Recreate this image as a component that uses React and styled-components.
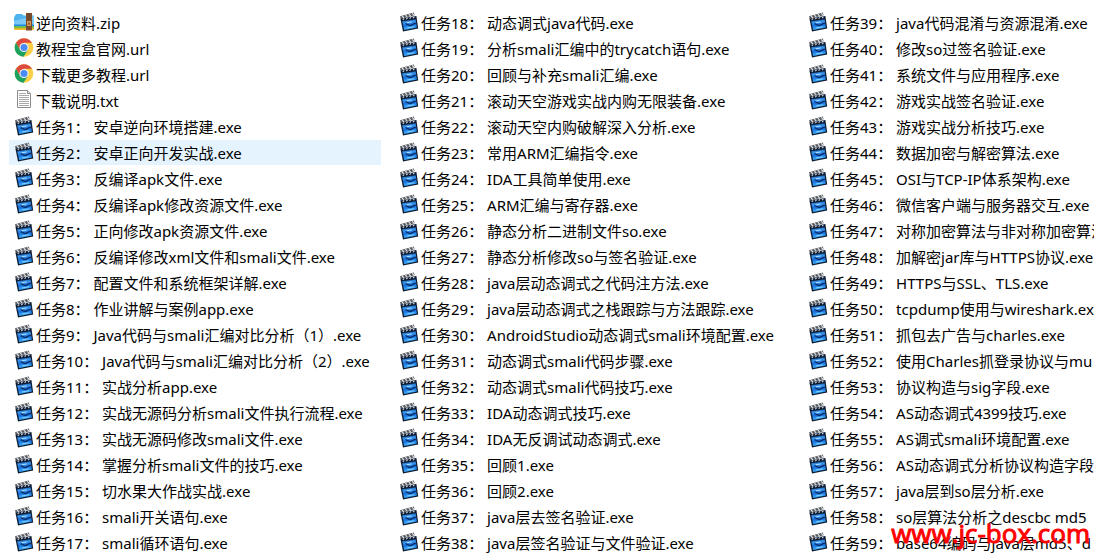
import React from "react";
import styled, { createGlobalStyle } from "styled-components";

const GlobalStyle = createGlobalStyle`
  * {
    box-sizing: border-box;
  }
  body {
    margin: 0;
    background: #ffffff;
    overflow: hidden;
  }
`;

const Explorer = styled.main`
  position: relative;
  height: 100vh;
  padding: 10px 0 0 9px;
  overflow: hidden;
  color: #000000;
  font-family: "Noto Sans", "Noto Sans CJK SC", sans-serif;
  font-size: 15px;
`;

const FileList = styled.ul`
  display: grid;
  grid-auto-flow: column;
  grid-template-rows: repeat(21, 26px);
  grid-template-columns: 372px 396px 1fr;
  column-gap: 13px;
  margin: 0;
  padding: 0;
  list-style: none;
`;

const FileRow = styled.li`
  display: flex;
  align-items: flex-start;
  gap: 2px;
  height: 25px;
  padding: 0 7px 0 5px;
  background: ${(props) => (props.$selected ? "#e5f3ff" : "transparent")};

  svg {
    flex: none;
    margin-top: 2px;
  }
`;

const FileName = styled.span`
  line-height: 26px;
  white-space: pre;
`;

const Watermark = styled.p`
  position: absolute;
  right: 4px;
  bottom: 7px;
  margin: 0;
  color: #ff0000;
  font-family: "Open Sans", sans-serif;
  font-size: 26px;
  line-height: 32px;
  -webkit-text-stroke: 1px #ff0000;
`;

const ZipIcon = () => (
  <svg width="20" height="20" viewBox="0 0 20 20" aria-hidden="true">
    <path d="M0 5.5 2 2h6l1.5 1.5H20V17H0z" fill="#4fb4ee" />
    <path d="M0 9 20 4v11H0z" fill="#7cc9f7" />
    <path d="M0 12.5h20v2H0z" fill="#1d8ade" />
    <path d="M0 14.2h20V17H0z" fill="#79bd3b" />
    <path d="M0 16.2h20V17a1 1 0 0 1-1 1H1a1 1 0 0 1-1-1z" fill="#f5b92e" />
    <path d="M12 1h6v17.5h-6z" fill="#7c4a28" />
    <path d="M14 1h2v9h-2z" fill="#38200f" />
    <path d="M14 2h2M14 4h2M14 6h2M14 8h2" stroke="#c79a6c" strokeWidth=".7" />
    <rect x="13" y="9" width="4" height="5" rx="1" fill="#d9a05c" />
    <path d="M14.4 10.5h1.2v2.2h-1.2z" fill="#5b3218" />
  </svg>
);

const ChromeIcon = () => (
  <svg width="20" height="20" viewBox="0 0 20 20" aria-hidden="true">
    <circle cx="10" cy="9.5" r="9.3" fill="#fbcf45" />
    <path d="M1.95 4.85A9.3 9.3 0 0 1 18.05 4.85H10L6 11.8z" fill="#de4b3e" />
    <path d="M1.95 4.85A9.3 9.3 0 0 0 9.5 18.8L14 11.8 10 13.9 6 11.8z" fill="#1ba160" />
    <circle cx="10" cy="9.5" r="4.6" fill="#f4f4f4" />
    <circle cx="10" cy="9.5" r="3.5" fill="#4a8af4" />
  </svg>
);

const TextIcon = () => (
  <svg width="20" height="20" viewBox="0 0 20 20" aria-hidden="true">
    <path d="M3.5.5h10l3 3v14h-13z" fill="#ffffff" stroke="#8c8c8c" />
    <path d="M13.5.5v3h3" fill="#e4e4e4" stroke="#8c8c8c" />
    <path
      d="M5 3.5h7M5 5.5h10M5 7.5h10M5 9.5h10M5 11.5h10M5 13.5h10M5 15.5h10"
      stroke="#a8a8a8"
    />
  </svg>
);

const ClapperIcon = () => (
  <svg width="20" height="20" viewBox="0 0 20 20" aria-hidden="true">
    <defs>
      <linearGradient id="slate" x1="0" y1="0" x2=".15" y2="1">
        <stop offset="0" stopColor="#0a3270" />
        <stop offset=".3" stopColor="#3b97ee" />
        <stop offset=".6" stopColor="#1a70dc" />
        <stop offset="1" stopColor="#3fb2ff" />
      </linearGradient>
    </defs>
    <path d="M1 4.200 14.800.600l.8 2.600L1.800 6.800z" fill="#55585e" />
    <path
      d="m3 4 1.800 1.800M6.400 3.100l1.800 1.800M9.800 2.200l1.800 1.800M13.200 1.400 15 3.100"
      stroke="#e2e5e8"
      strokeWidth="1.2"
    />
    <path d="M1.400 6.400 17.400 4 19.200 16.600 4 19.400z" fill="#0d1c33" />
    <path d="M3.200 9.200 16.600 7.200 17.800 15.600 5.200 18z" fill="url(#slate)" />
    <path
      d="m3.800 7.800 1.400-1.400M7.200 7.200l1.400-1.400M10.600 6.700 12 5.300M14 6.200l1.400-1.400"
      stroke="#d4d8dd"
      strokeWidth="1.1"
    />
    <path
      d="M6.600 11.600c2 .6 3 2.200 5 1.800s2.200-1.600 5.200-2.200"
      fill="none"
      stroke="#06285c"
      strokeWidth="1.300"
    />
    <path d="m7.600 10.800 5-.8" stroke="#a8dcff" strokeWidth="1.100" />
    <path d="m8 16 7-1.200" stroke="#7ed0ff" strokeWidth="1" />
  </svg>
);

const icons = {
  zip: ZipIcon,
  url: ChromeIcon,
  txt: TextIcon,
  exe: ClapperIcon,
};

const files = [
  "逆向资料.zip",
  "教程宝盒官网.url",
  "下载更多教程.url",
  "下载说明.txt",
];

const tasks = [
  "安卓逆向环境搭建.exe",
  "安卓正向开发实战.exe",
  "反编译apk文件.exe",
  "反编译apk修改资源文件.exe",
  "正向修改apk资源文件.exe",
  "反编译修改xml文件和smali文件.exe",
  "配置文件和系统框架详解.exe",
  "作业讲解与案例app.exe",
  "Java代码与smali汇编对比分析（1）.exe",
  "Java代码与smali汇编对比分析（2）.exe",
  "实战分析app.exe",
  "实战无源码分析smali文件执行流程.exe",
  "实战无源码修改smali文件.exe",
  "掌握分析smali文件的技巧.exe",
  "切水果大作战实战.exe",
  "smali开关语句.exe",
  "smali循环语句.exe",
  "动态调式java代码.exe",
  "分析smali汇编中的trycatch语句.exe",
  "回顾与补充smali汇编.exe",
  "滚动天空游戏实战内购无限装备.exe",
  "滚动天空内购破解深入分析.exe",
  "常用ARM汇编指令.exe",
  "IDA工具简单使用.exe",
  "ARM汇编与寄存器.exe",
  "静态分析二进制文件so.exe",
  "静态分析修改so与签名验证.exe",
  "java层动态调式之代码注方法.exe",
  "java层动态调式之栈跟踪与方法跟踪.exe",
  "AndroidStudio动态调式smali环境配置.exe",
  "动态调式smali代码步骤.exe",
  "动态调式smali代码技巧.exe",
  "IDA动态调式技巧.exe",
  "IDA无反调试动态调式.exe",
  "回顾1.exe",
  "回顾2.exe",
  "java层去签名验证.exe",
  "java层签名验证与文件验证.exe",
  "java代码混淆与资源混淆.exe",
  "修改so过签名验证.exe",
  "系统文件与应用程序.exe",
  "游戏实战签名验证.exe",
  "游戏实战分析技巧.exe",
  "数据加密与解密算法.exe",
  "OSI与TCP-IP体系架构.exe",
  "微信客户端与服务器交互.exe",
  "对称加密算法与非对称加密算法.exe",
  "加解密jar库与HTTPS协议.exe",
  "HTTPS与SSL、TLS.exe",
  "tcpdump使用与wireshark.exe",
  "抓包去广告与charles.exe",
  "使用Charles抓登录协议与mu",
  "协议构造与sig字段.exe",
  "AS动态调式4399技巧.exe",
  "AS调式smali环境配置.exe",
  "AS动态调式分析协议构造字段",
  "java层到so层分析.exe",
  "so层算法分析之descbc md5",
  "base64编码与java层md5、d",
];

const names = [...files, ...tasks.map((task, i) => `任务${i + 1}： ${task}`)];

const getIcon = (name) => icons[name.split(".").pop()] || ClapperIcon;

const File = ({ name, selected }) => {
  const Icon = getIcon(name);
  return (
    <FileRow $selected={selected}>
      <Icon />
      <FileName>{name}</FileName>
    </FileRow>
  );
};

const App = () => {
  return (
    <>
      <GlobalStyle />
      <Explorer>
        <FileList>
          {names.map((name, i) => (
            <File key={name} name={name} selected={i === 5} />
          ))}
        </FileList>
        <Watermark>www.jc-box.com</Watermark>
      </Explorer>
    </>
  );
};

export default App;
